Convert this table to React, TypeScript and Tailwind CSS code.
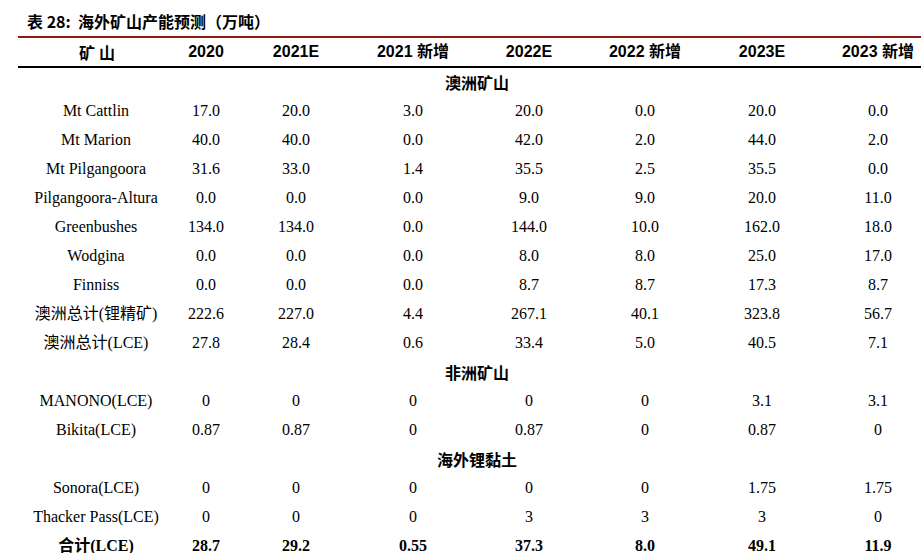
import React from 'react';

// ─── Data ────────────────────────────────────────────────────────────────

type Row =
    | { kind: 'section'; title: string }
    | { kind: 'data'; label: string; values: string[]; bold?: boolean };

const headers = ['2020', '2021E', '2021 新增', '2022E', '2022 新增', '2023E', '2023 新增'];

const rows: Row[] = [
    { kind: 'section', title: '澳洲矿山' },
    { kind: 'data', label: 'Mt Cattlin', values: ['17.0', '20.0', '3.0', '20.0', '0.0', '20.0', '0.0'] },
    { kind: 'data', label: 'Mt Marion', values: ['40.0', '40.0', '0.0', '42.0', '2.0', '44.0', '2.0'] },
    { kind: 'data', label: 'Mt Pilgangoora', values: ['31.6', '33.0', '1.4', '35.5', '2.5', '35.5', '0.0'] },
    { kind: 'data', label: 'Pilgangoora-Altura', values: ['0.0', '0.0', '0.0', '9.0', '9.0', '20.0', '11.0'] },
    { kind: 'data', label: 'Greenbushes', values: ['134.0', '134.0', '0.0', '144.0', '10.0', '162.0', '18.0'] },
    { kind: 'data', label: 'Wodgina', values: ['0.0', '0.0', '0.0', '8.0', '8.0', '25.0', '17.0'] },
    { kind: 'data', label: 'Finniss', values: ['0.0', '0.0', '0.0', '8.7', '8.7', '17.3', '8.7'] },
    { kind: 'data', label: '澳洲总计(锂精矿)', values: ['222.6', '227.0', '4.4', '267.1', '40.1', '323.8', '56.7'] },
    { kind: 'data', label: '澳洲总计(LCE)', values: ['27.8', '28.4', '0.6', '33.4', '5.0', '40.5', '7.1'] },
    { kind: 'section', title: '非洲矿山' },
    { kind: 'data', label: 'MANONO(LCE)', values: ['0', '0', '0', '0', '0', '3.1', '3.1'] },
    { kind: 'data', label: 'Bikita(LCE)', values: ['0.87', '0.87', '0', '0.87', '0', '0.87', '0'] },
    { kind: 'section', title: '海外锂黏土' },
    { kind: 'data', label: 'Sonora(LCE)', values: ['0', '0', '0', '0', '0', '1.75', '1.75'] },
    { kind: 'data', label: 'Thacker Pass(LCE)', values: ['0', '0', '0', '3', '3', '3', '0'] },
    { kind: 'data', label: '合计(LCE)', values: ['28.7', '29.2', '0.55', '37.3', '8.0', '49.1', '11.9'], bold: true },
];

// Fixed column widths — the last column runs past the window edge, as in the report crop
const gridCols = 'grid grid-cols-[156px_64px_116px_118px_114px_118px_116px_116px]';

const serif = "font-['Liberation_Serif','Noto_Sans_CJK_SC',serif]";
const cjkBold = "font-['Noto_Sans_CJK_SC',sans-serif] font-bold";

// ─── Component ────────────────────────────────────────────────────────────

export default function App() {
    return (
        <div className="w-[921px] h-[553px] overflow-hidden bg-white text-black">

            {/* ── Caption ── */}
            <div className={`h-[36px] pt-[6px] pl-[27px] flex items-center text-[16px] ${cjkBold}`}>
                表 28:&nbsp;&nbsp;海外矿山产能预测（万吨）
            </div>

            <div className="ml-[18px] w-[918px]">

                {/* ── Header row: red rule above, black rule below ── */}
                <div className={`${gridCols} h-[32px] border-t-2 border-b-2 border-t-[#8c1c13] border-b-black items-center`}>
                    <div className={`text-center pl-[6px] text-[16px] tracking-[4px] ${cjkBold}`}>矿山</div>
                    {headers.map(h => (
                        <div
                            key={h}
                            className="text-center text-[16px] font-bold font-['Liberation_Sans','Noto_Sans_CJK_SC',sans-serif]"
                        >
                            {h}
                        </div>
                    ))}
                </div>

                {/* ── Body ── */}
                {rows.map((r, i) =>
                    r.kind === 'section' ? (
                        <div key={i} className={`h-[29px] pb-[1px] flex items-center justify-center text-[16px] ${cjkBold}`}>
                            {r.title}
                        </div>
                    ) : (
                        <div
                            key={i}
                            className={`${gridCols} h-[29px] pb-[1px] items-center text-[16px] ${serif} ${r.bold ? 'font-bold' : ''}`}
                        >
                            <div className="text-center whitespace-nowrap">{r.label}</div>
                            {r.values.map((v, j) => (
                                <div key={j} className="text-center">{v}</div>
                            ))}
                        </div>
                    )
                )}
            </div>
        </div>
    );
}
